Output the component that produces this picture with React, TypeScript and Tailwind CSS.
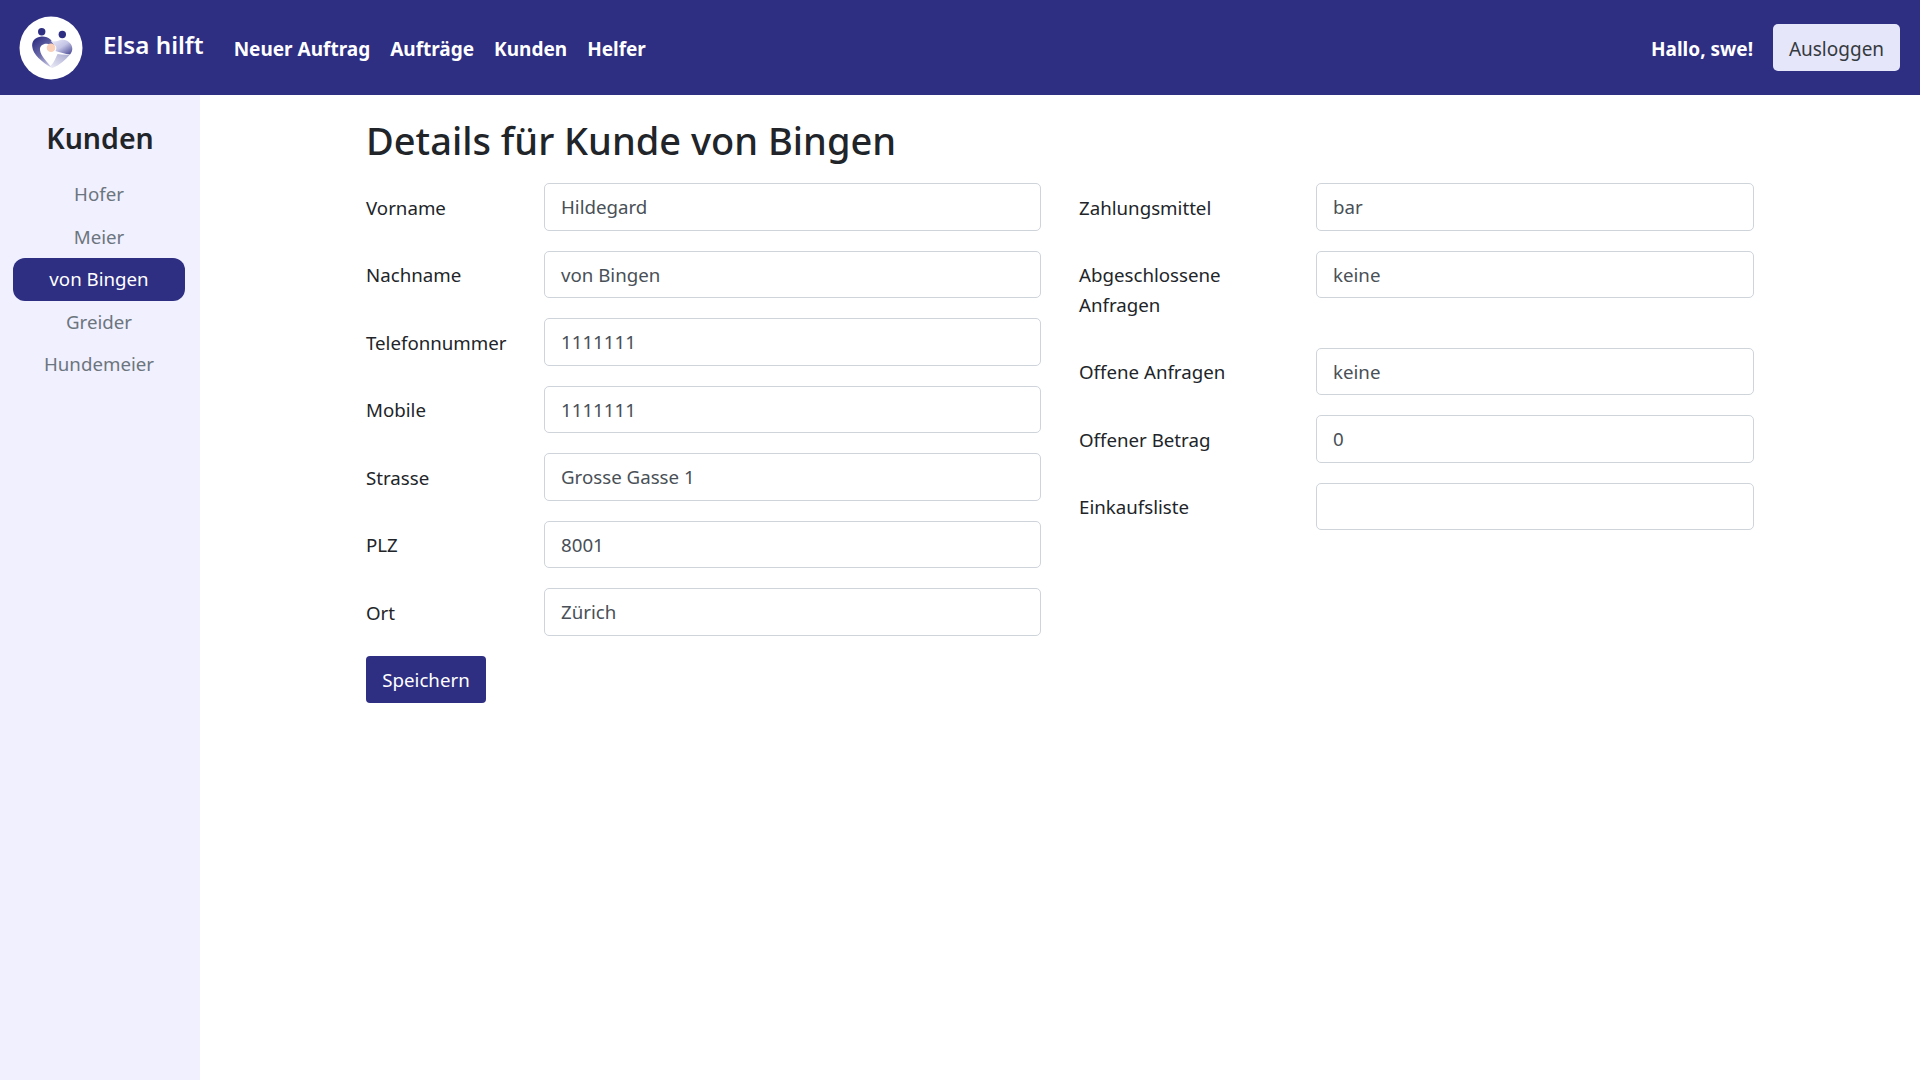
const font = { fontFamily: '"Noto Sans", "Open Sans", sans-serif' };

function Logo() {
  return (
    <svg width="64" height="64" viewBox="0 0 64 64" className="shrink-0">
      <defs>
        <linearGradient id="l" x1="0.2" y1="0" x2="0.8" y2="1">
          <stop offset="0" stopColor="#2e2e82" />
          <stop offset="0.5" stopColor="#6a6aaa" />
          <stop offset="1" stopColor="#d4d4ec" />
        </linearGradient>
        <linearGradient id="r" x1="0" y1="0" x2="1" y2="1">
          <stop offset="0" stopColor="#eeeefa" />
          <stop offset="0.5" stopColor="#c4c4e6" />
          <stop offset="1" stopColor="#42428e" />
        </linearGradient>
        <linearGradient id="b" x1="1" y1="0" x2="0" y2="1">
          <stop offset="0" stopColor="#a8a8d0" />
          <stop offset="1" stopColor="#ebebf7" />
        </linearGradient>
      </defs>
      <circle cx="32" cy="32" r="31.5" fill="#fff" />
      <circle cx="22.7" cy="15.8" r="3.7" fill="#2e2e82" />
      <circle cx="43.3" cy="18.5" r="3.7" fill="#2e2e82" />
      <g transform="translate(0.5 0)">
        <path d="M22 20.5C15 21 12 26 12.8 31 13.5 38 22 46 32.5 52 28 46 21 40 20.5 34 20 29 25 27 28.5 28 31 28.7 34 30 35 31 34 25 29 20 22 20.5z" fill="url(#l)" />
        <path d="M31 25C35 26 38 25 42 23.8 48 23 53 28 52.8 33 52.6 36 51.5 37 50.5 38.5 46 38 40 36 36 35 37.5 33 37 30 35 29 33.5 27 32 26 31 25z" fill="url(#r)" />
        <path d="M50.5 38.5C46 44 40 49 33 52 31.5 51 31 50 31 50 35 46 36 42 38 38 42 38.5 46 39 50.5 38.5z" fill="url(#b)" />
        <circle cx="31.5" cy="31.8" r="4.3" fill="#fbd0b8" />
      </g>
    </svg>
  );
}

function Field({ label, value, labelW, tall }: { label: string; value: string; labelW: string; tall?: boolean }) {
  return (
    <div className="flex items-start mb-[20px]">
      <label className={`${labelW} shrink-0 pt-[9.5px] text-[18.7px] leading-[30px] text-[#212529] ${tall ? "pr-10 min-h-[77px]" : ""}`}>{label}</label>
      <div className="flex-1 h-[47.5px] rounded-[5px] border border-[#ced4da] bg-white px-4 pt-[1px] flex items-center text-[18.7px] text-[#495057]">{value}</div>
    </div>
  );
}

export default function App() {
  const left = [
    ["Vorname", "Hildegard"],
    ["Nachname", "von Bingen"],
    ["Telefonnummer", "1111111"],
    ["Mobile", "1111111"],
    ["Strasse", "Grosse Gasse 1"],
    ["PLZ", "8001"],
    ["Ort", "Zürich"],
  ];
  const customers = ["Hofer", "Meier", "von Bingen", "Greider", "Hundemeier"];
  return (
    <div className="min-h-[1080px] flex flex-col bg-white" style={font}>
      <header className="h-[95px] bg-[#2e2e82] flex items-center pl-[19px] pr-5 text-white">
        <Logo />
        <span className="ml-5 text-[24.2px] font-semibold relative top-[-2px]">Elsa hilft</span>
        <nav className="ml-[30px] flex gap-5 text-[19px] font-bold relative top-[1.5px]">
          <span>Neuer Auftrag</span>
          <span>Aufträge</span>
          <span>Kunden</span>
          <span>Helfer</span>
        </nav>
        <span className="ml-auto mr-5 text-[19px] font-bold relative top-[1.5px]">Hallo, swe!</span>
        <button className="h-[47px] w-[127px] rounded-[5px] bg-[#e6e6fa] text-[19px] text-[#343a40]">
          <span className="relative top-[1.5px]">Ausloggen</span>
        </button>
      </header>
      <div className="flex flex-1">
        <aside className="w-[200px] h-[985px] bg-[#f0f0ff] pl-[13px] pr-[15px] pt-[26px]">
          <h2 className="text-[28.5px] font-semibold text-[#212529] text-center leading-[34px] mb-[18px] -mr-[2px]">Kunden</h2>
          <ul>
            {customers.map((c) => (
              <li
                key={c}
                className={`h-[42.5px] rounded-[12px] flex items-center justify-center text-[18.7px] ${c === "von Bingen" ? "bg-[#2e2e82] text-white" : "text-[#6c757d]"}`}
              >
                {c}
              </li>
            ))}
          </ul>
        </aside>
        <main className="pl-[166px] w-[1588px]">
          <h1 className="text-[38px] font-medium text-[#212529] leading-[48px] mt-[21px] mb-[19px]">Details für Kunde von Bingen</h1>
          <div className="flex gap-[38px]">
            <div className="w-[675px]">
              {left.map(([l, v]) => (
                <Field key={l} label={l} value={v} labelW="w-[178px]" />
              ))}
              <button className="h-[47.5px] w-[120px] rounded-[4px] bg-[#2e2e82] pt-[1px] text-white text-[18.7px]">Speichern</button>
            </div>
            <div className="w-[675px]">
              <Field label="Zahlungsmittel" value="bar" labelW="w-[237px]" />
              <Field label="Abgeschlossene Anfragen" value="keine" labelW="w-[237px]" tall />
              <Field label="Offene Anfragen" value="keine" labelW="w-[237px]" />
              <Field label="Offener Betrag" value="0" labelW="w-[237px]" />
              <Field label="Einkaufsliste" value="" labelW="w-[237px]" />
            </div>
          </div>
        </main>
      </div>
    </div>
  );
}
